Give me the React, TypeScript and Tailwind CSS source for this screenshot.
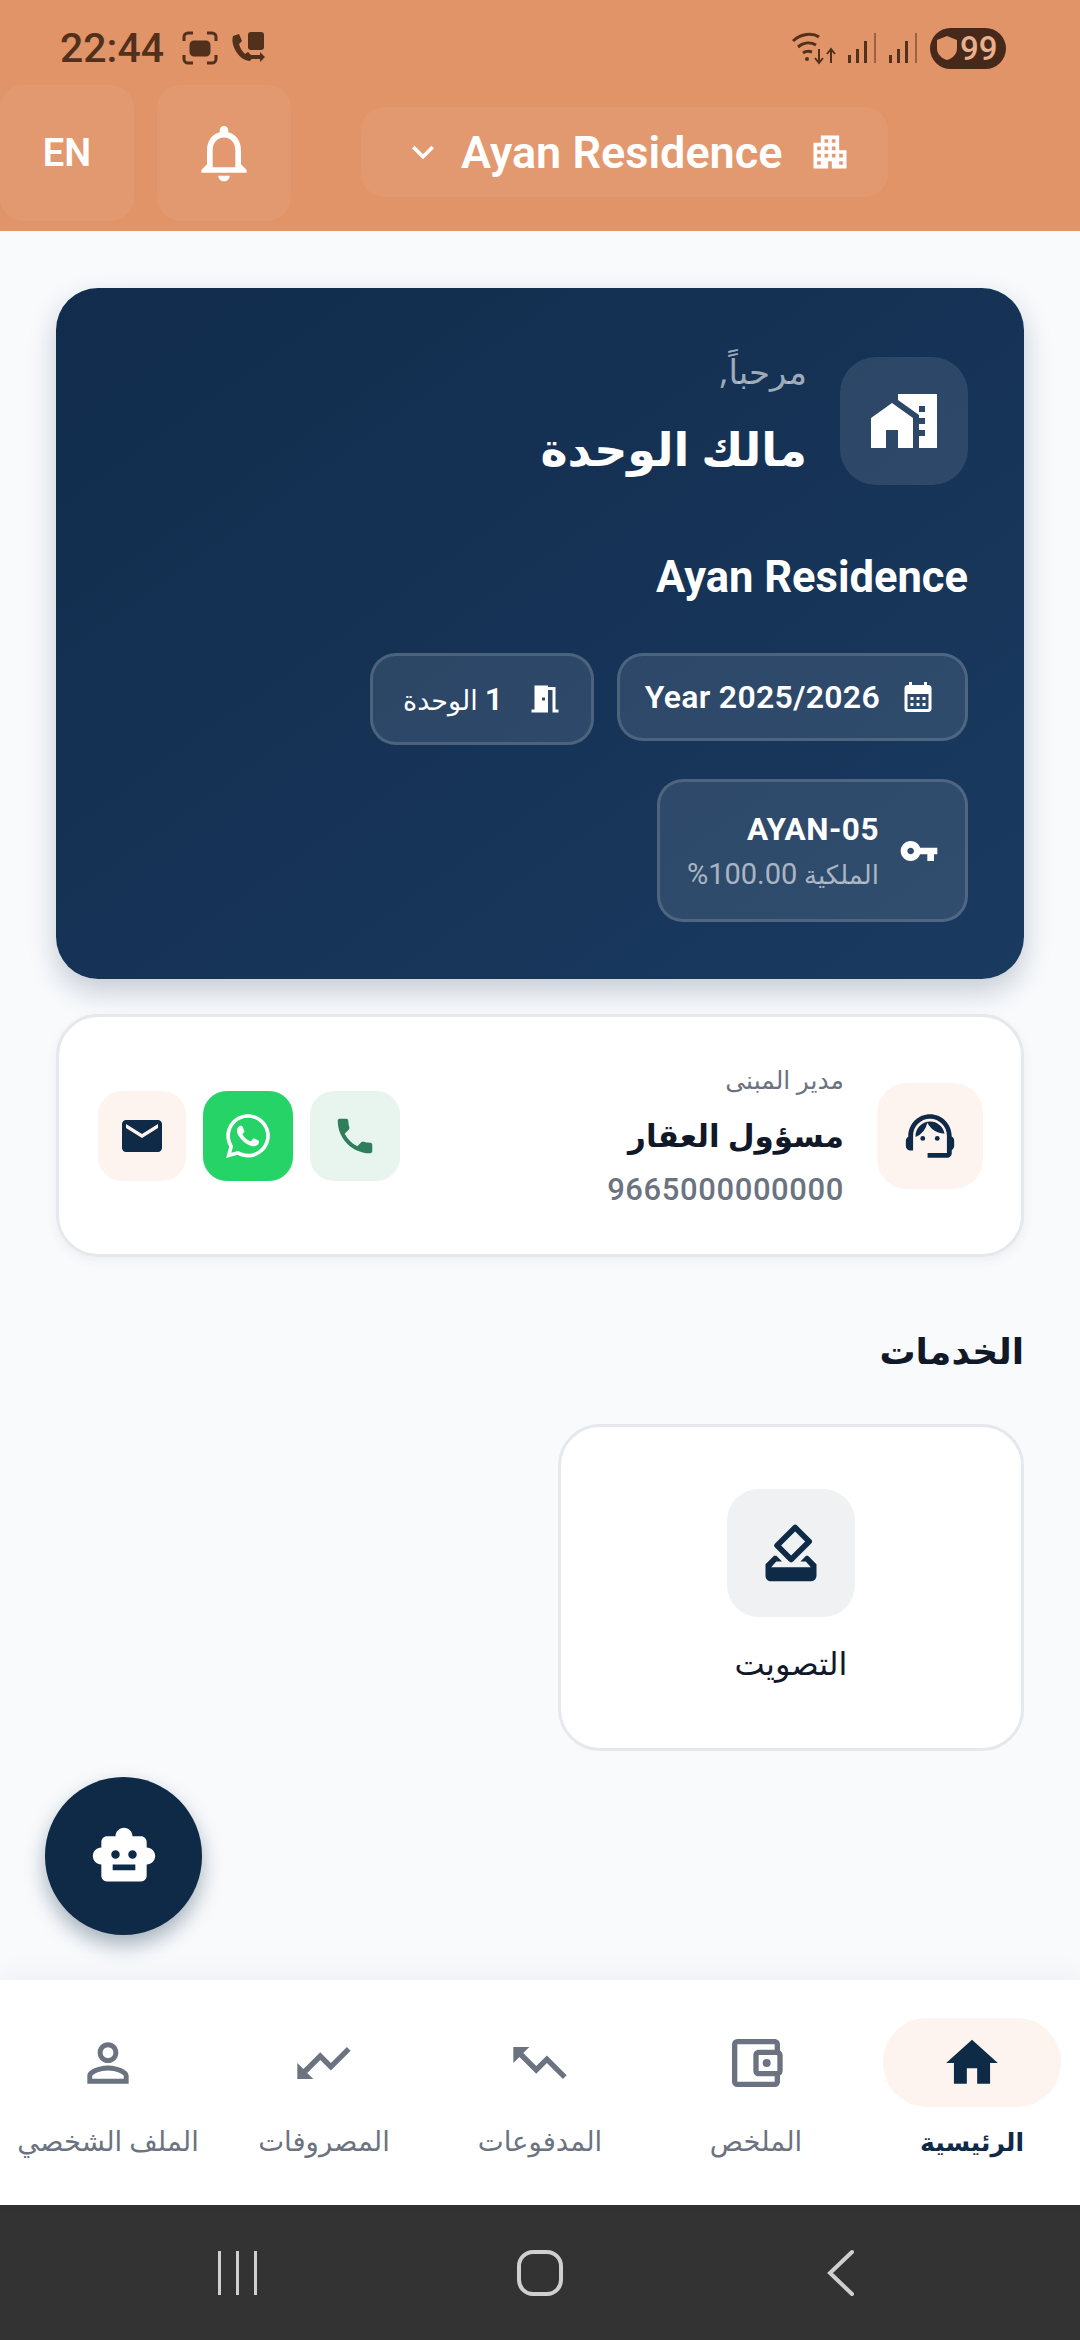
import type { ReactNode } from 'react'
import { FaWhatsapp } from 'react-icons/fa'
import {
  MdApartment,
  MdCalendarMonth,
  MdEmail,
  MdHome,
  MdHomeWork,
  MdHowToVote,
  MdKeyboardArrowDown,
  MdMeetingRoom,
  MdOutlineAccountBalanceWallet,
  MdOutlineNotifications,
  MdOutlinePersonOutline,
  MdPhone,
  MdSmartToy,
  MdSupportAgent,
  MdTrendingDown,
  MdTrendingUp,
  MdVpnKey,
} from 'react-icons/md'

const arabic = "font-['Noto_Sans','DejaVu_Sans',sans-serif]"

function StatusBar() {
  return (
    <div dir="ltr" className="h-[85px] flex items-center justify-between pl-[60px] pr-[74px] pt-[11px] text-[#51301c]">
      <div className="flex items-center">
        <span className="font-['Roboto',sans-serif] font-medium text-[41px] leading-none">22:44</span>
        <svg className="ml-[18px]" width="36" height="34" viewBox="0 0 36 34" fill="none" stroke="currentColor" strokeWidth="3">
          <path d="M2 10V6a4 4 0 0 1 4-4h5M25 2h5a4 4 0 0 1 4 4v4M34 24v4a4 4 0 0 1-4 4h-5M11 32H6a4 4 0 0 1-4-4v-4" />
          <rect x="9" y="11" width="18" height="13" rx="3" fill="currentColor" />
        </svg>
        <svg className="ml-[12px]" width="36" height="34" viewBox="0 0 36 34" fill="currentColor">
          <path d="M3 5l6-2 3 7-3 3c1 4 3 7 6 10l3-2 5 5-3 4C10 30 0 15 3 5z" />
          <rect x="18" y="1" width="16" height="18" rx="3" />
          <path d="M20 24h10v-3l5 5-5 5v-3H20z" />
        </svg>
      </div>
      <div className="flex items-center">
        <svg width="46" height="38" viewBox="0 0 46 38" fill="none" stroke="currentColor" strokeWidth="3">
          <path d="M2 12c8-8 20-8 26-4M7 18c6-5 13-5 18-2M12 24c3-2 6-2 9-1" />
          <circle cx="16" cy="30" r="2" fill="currentColor" stroke="none" />
          <path d="M28 20v14M24 29l4 5 4-5M40 34V20M36 25l4-5 4 5" strokeWidth="2" />
        </svg>
        <svg className="ml-[10px]" width="32" height="34" viewBox="0 0 32 34" fill="currentColor">
          <rect x="1" y="24" width="3" height="8" />
          <rect x="9" y="18" width="3" height="14" />
          <rect x="17" y="10" width="3" height="22" />
          <rect x="27" y="2" width="2" height="30" opacity="0.5" />
        </svg>
        <svg className="ml-[9px]" width="32" height="34" viewBox="0 0 32 34" fill="currentColor">
          <rect x="1" y="24" width="3" height="8" />
          <rect x="9" y="18" width="3" height="14" />
          <rect x="17" y="10" width="3" height="22" />
          <rect x="27" y="2" width="2" height="30" opacity="0.5" />
        </svg>
        <div className="ml-[10px] w-[76px] h-[41px] rounded-full bg-[#46291a] flex items-center pl-[5px] gap-[1px]">
          <svg width="24" height="28" viewBox="0 0 24 28" fill="#e19468">
            <path d="M12 2l10 4v8c0 6-4 10-10 12C6 24 2 20 2 14V6z" />
          </svg>
          <span className="font-['Roboto',sans-serif] font-medium text-[33px] leading-none text-[#e9b08e]">99</span>
        </div>
      </div>
    </div>
  )
}

function Header() {
  return (
    <div className="h-[231px] bg-[#e19468] shrink-0">
      <StatusBar />
      <div dir="ltr" className="flex items-center">
        <button className="w-[134px] h-[136px] rounded-[24px] bg-white/5 flex items-center justify-center font-['Roboto',sans-serif] font-semibold text-[38px] text-white">
          EN
        </button>
        <button className="ml-[23px] w-[134px] h-[136px] rounded-[24px] bg-white/5 flex items-center justify-center text-white">
          <MdOutlineNotifications size={68} />
        </button>
        <div className="ml-[70px] mt-[-2px] w-[527px] h-[90px] rounded-[24px] bg-white/5 flex items-center pl-[40px] text-white">
          <MdKeyboardArrowDown size={44} />
          <span className="ml-[16px] font-['Roboto',sans-serif] font-semibold text-[45px] leading-none">Ayan Residence</span>
          <MdApartment size={44} className="ml-[26px]" />
        </div>
      </div>
    </div>
  )
}

function Chip({ children, className }: { children: ReactNode; className: string }) {
  return (
    <div className={`flex items-center rounded-[26px] border-[3px] border-white/15 bg-white/10 text-white ${className}`}>
      {children}
    </div>
  )
}

function WelcomeCard() {
  return (
    <div className="mx-[56px] mt-[57px] h-[691px] rounded-[42px] bg-gradient-to-br from-[#112c4c] to-[#1a3a60] px-[56px] pt-[69px] shadow-[0_12px_28px_rgba(15,42,71,0.22)]">
      <div className="flex items-start">
        <div className="w-[128px] h-[128px] rounded-[36px] bg-white/10 flex items-center justify-center text-white">
          <MdHomeWork size={72} />
        </div>
        <div className="mr-[33px] h-[128px]">
          <div className={`${arabic} -mt-[6px] text-[34px] leading-[40px] text-white/60`}>مرحباً,</div>
          <div className={`${arabic} mt-[22px] font-bold text-[46px] leading-[70px] text-white`}>مالك الوحدة</div>
        </div>
      </div>
      <div className="mt-[69px] font-['Roboto',sans-serif] font-bold text-[43.5px] leading-[48px] text-white">Ayan Residence</div>
      <div className="mt-[51px] flex items-start gap-[23px]">
        <Chip className="w-[351px] h-[88px] pr-[29px] gap-[20px]">
          <MdCalendarMonth size={36} />
          <span dir="ltr" className="font-['Roboto',sans-serif] font-semibold text-[32px] tracking-[0.3px]">Year 2025/2026</span>
        </Chip>
        <Chip className="w-[224px] h-[92px] pr-[28px] gap-[24px]">
          <MdMeetingRoom size={36} />
          <span className={`${arabic} font-medium text-[27px]`}>
            <span className="font-['Roboto',sans-serif] font-semibold text-[32px]">1</span> الوحدة
          </span>
        </Chip>
      </div>
      <Chip className="mt-[34px] w-[311px] h-[143px] pr-[26px] gap-[20px]">
        <MdVpnKey size={40} />
        <div>
          <div className="font-['Roboto',sans-serif] font-bold text-[31.5px] leading-[40px] tracking-[0.5px]">AYAN-05</div>
          <div className={`${arabic} mt-[6px] text-[26px] leading-[36px] text-white/60`}>
            الملكية <span className="font-['Roboto',sans-serif] text-[29px]">100.00%</span>
          </div>
        </div>
      </Chip>
    </div>
  )
}

function ContactCard() {
  return (
    <div className="mx-[56px] mt-[35px] h-[243px] rounded-[42px] border-[3px] border-[#e5e8ec] bg-white pr-[38px] pl-[39px] flex items-center shadow-[0_4px_12px_rgba(15,42,71,0.05)]">
      <div className="w-[106px] h-[106px] rounded-[30px] bg-[#fdf4ef] flex items-center justify-center text-[#0f2a47]">
        <MdSupportAgent size={58} />
      </div>
      <div className="mr-[33px] flex-1 text-right">
        <div className={`${arabic} -mt-[2px] text-[25px] leading-[34px] text-[#6b7280]`}>مدير المبنى</div>
        <div className={`${arabic} mt-[14px] font-bold text-[31px] leading-[50px] text-[#111827]`}>مسؤول العقار</div>
        <div dir="ltr" className="mt-[12px] text-right font-['Roboto',sans-serif] font-medium text-[31px] leading-[36px] tracking-[0.6px] text-[#6b7280]">
          9665000000000
        </div>
      </div>
      <div className="flex gap-[17px]">
        <button className="w-[90px] h-[90px] rounded-[24px] bg-[#e8f4ee] flex items-center justify-center text-[#2e7d5b]">
          <MdPhone size={46} />
        </button>
        <button className="w-[90px] h-[90px] rounded-[24px] bg-[#25d366] flex items-center justify-center text-white">
          <FaWhatsapp size={50} />
        </button>
        <button className="w-[88px] h-[90px] rounded-[24px] bg-[#fdf4ef] flex items-center justify-center text-[#0f2a47]">
          <MdEmail size={48} />
        </button>
      </div>
    </div>
  )
}

function Services() {
  return (
    <div className="mx-[56px] mt-[65px]">
      <div className={`${arabic} font-bold text-[36px] leading-[58px] text-[#111827]`}>الخدمات</div>
      <div className="mt-[44px] w-[466px] h-[327px] rounded-[42px] border-[3px] border-[#e5e8ec] bg-white flex flex-col items-center pt-[62px]">
        <div className="w-[128px] h-[128px] rounded-[32px] bg-[#eff1f3] flex items-center justify-center text-[#0f2a47]">
          <MdHowToVote size={68} />
        </div>
        <div className={`${arabic} mt-[24px] font-medium text-[32px] leading-[44px] text-[#111827]`}>التصويت</div>
      </div>
    </div>
  )
}

const navItems = [
  { label: 'الرئيسية', icon: <MdHome size={62} />, active: true },
  { label: 'الملخص', icon: <MdOutlineAccountBalanceWallet size={64} /> },
  { label: 'المدفوعات', icon: <MdTrendingUp size={64} className="-scale-x-100" /> },
  { label: 'المصروفات', icon: <MdTrendingDown size={64} className="-scale-x-100" /> },
  { label: 'الملف الشخصي', icon: <MdOutlinePersonOutline size={62} /> },
]

function BottomNav() {
  return (
    <div className="h-[225px] shrink-0 bg-white grid grid-cols-5 shadow-[0_-8px_24px_rgba(15,42,71,0.04)] z-10">
      {navItems.map((item) => (
        <div key={item.label} className="flex flex-col items-center pt-[38px]">
          <div className={`w-[178px] h-[89px] rounded-[44px] flex items-center justify-center ${item.active ? 'bg-[#fdf4ef] text-[#0f2a47]' : 'text-[#6b7280]'}`}>
            {item.icon}
          </div>
          <div className={`${arabic} mt-[9px] whitespace-nowrap leading-[50px] ${item.active ? 'text-[25px] font-bold text-[#0f2a47]' : 'text-[27.5px] text-[#6b7280]'}`}>
            {item.label}
          </div>
        </div>
      ))}
    </div>
  )
}

function AndroidBar() {
  return (
    <div dir="ltr" className="h-[135px] shrink-0 bg-[#333333] grid grid-cols-3 items-center px-[108px] text-[#d0d0d0]">
      <div className="flex justify-center gap-[15px] pr-[30px]">
        <div className="w-[3px] h-[44px] bg-current" />
        <div className="w-[3px] h-[44px] bg-current" />
        <div className="w-[3px] h-[44px] bg-current" />
      </div>
      <div className="flex justify-center">
        <div className="w-[46px] h-[46px] rounded-[16px] border-[4px] border-current" />
      </div>
      <div className="flex justify-center pl-[24px]">
        <svg width="28" height="48" viewBox="0 0 28 48" fill="none" stroke="currentColor" strokeWidth="4" strokeLinecap="round">
          <path d="M26 3L4 24l22 21" />
        </svg>
      </div>
    </div>
  )
}

export default function App() {
  return (
    <div dir="rtl" className="relative w-[1080px] h-[2340px] overflow-hidden flex flex-col bg-[#f8fafc]">
      <Header />
      <div className="flex-1 min-h-0">
        <WelcomeCard />
        <ContactCard />
        <Services />
      </div>
      <button className="absolute left-[45px] top-[1777px] w-[157px] h-[158px] rounded-full bg-[#0f2a47] flex items-center justify-center text-white shadow-[0_10px_20px_rgba(15,42,71,0.35)] z-20">
        <MdSmartToy size={68} />
      </button>
      <BottomNav />
      <AndroidBar />
    </div>
  )
}
